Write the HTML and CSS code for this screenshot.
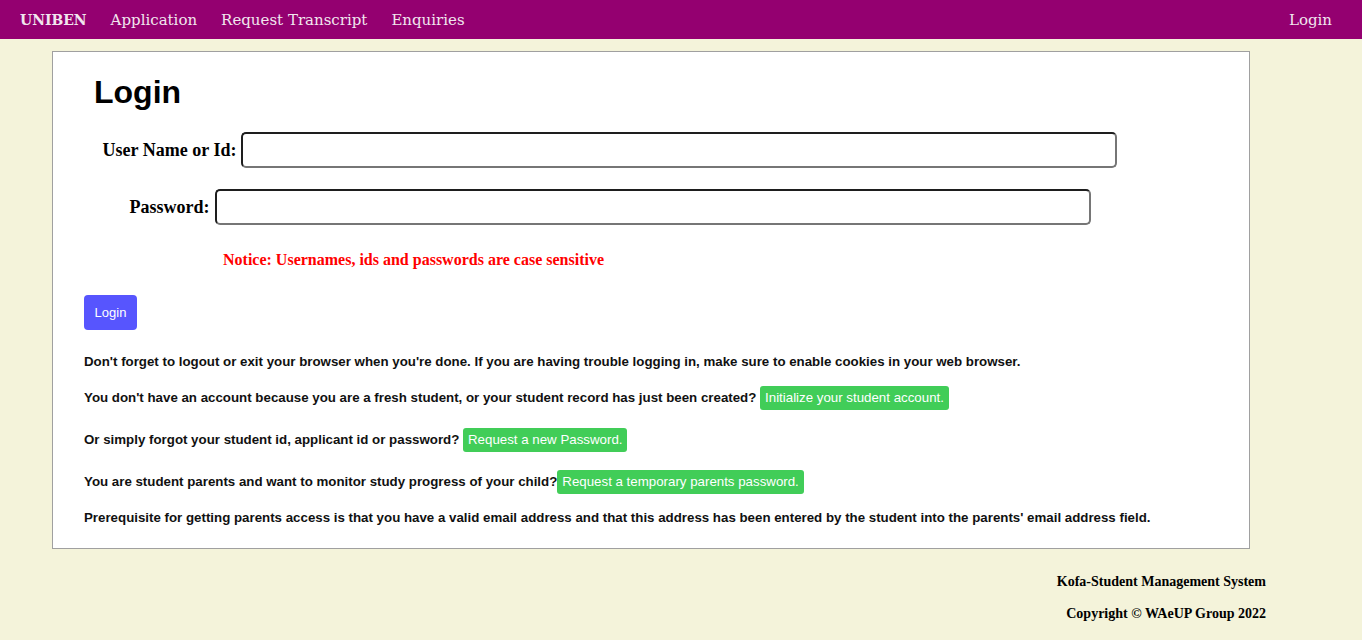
FILE: index.html
```html
<!DOCTYPE html>
<html lang="en">
<head>
<meta charset="utf-8">
<title>Login</title>
<link rel="stylesheet" href="styles.css">
</head>
<body>
<nav class="navbar">
  <div class="nav-left">
    <a class="brand" href="#">UNIBEN</a>
    <a class="nav-link" href="#">Application</a>
    <a class="nav-link" href="#">Request Transcript</a>
    <a class="nav-link" href="#">Enquiries</a>
  </div>
  <a class="nav-link" href="#">Login</a>
</nav>
<main class="card">
  <h1 class="title">Login</h1>
  <form class="form">
    <div class="row row-user">
      <label class="label" for="user">User Name or Id:</label>
      <input class="input" id="user" type="text">
    </div>
    <div class="row row-pass">
      <label class="label" for="pass">Password:</label>
      <input class="input" id="pass" type="password">
    </div>
  </form>
  <p class="notice">Notice: Usernames, ids and passwords are case sensitive</p>
  <div class="actions"><button class="btn-login" type="button">Login</button></div>
  <p class="info">Don't forget to logout or exit your browser when you're done. If you are having trouble logging in, make sure to enable cookies in your web browser.</p>
  <p class="info">You don't have an account because you are a fresh student, or your student record has just been created? <a class="btn-green" href="#">Initialize your student account.</a></p>
  <p class="info">Or simply forgot your student id, applicant id or password? <a class="btn-green" href="#">Request a new Password.</a></p>
  <p class="info">You are student parents and want to monitor study progress of your child?<a class="btn-green" href="#">Request a temporary parents password.</a></p>
  <p class="info">Prerequisite for getting parents access is that you have a valid email address and that this address has been entered by the student into the parents' email address field.</p>
</main>
<footer class="footer">
  <p class="foot-line">Kofa-Student Management System</p>
  <p class="foot-line">Copyright © WAeUP Group 2022</p>
</footer>
</body>
</html>
```
FILE: styles.css
```css
* { box-sizing: border-box; }
html, body { margin: 0; padding: 0; }
body {
  background: #f4f3da;
  font-family: "Liberation Sans", Arial, sans-serif;
  color: #000;
}
.navbar {
  height: 39px;
  background: #940070;
  display: flex;
  align-items: center;
  justify-content: space-between;
  padding: 0 30px 0 20px;
}
.nav-left { display: flex; align-items: center; gap: 24px; }
.navbar a {
  color: #f1e6ee;
  text-decoration: none;
  font-family: "DejaVu Serif", "Liberation Serif", serif;
  font-size: 15px;
  line-height: 18px;
  padding-top: 1px;
}
.navbar .brand {
  font-family: "DejaVu Serif Condensed", "DejaVu Serif", serif;
  font-stretch: condensed;
  font-weight: bold;
  font-size: 15.5px;
}
.card {
  margin: 12px 0 0 52px;
  width: 1198px;
  height: 498px;
  background: #fff;
  border: 1px solid #a0a0a0;
  padding: 0 31px;
  display: flex;
  flex-direction: column;
}
.title {
  margin: 22px 0 0 10px;
  font-size: 32px;
  line-height: 37px;
  font-weight: bold;
}
.form {
  width: 1052px;
  margin-top: 21px;
  display: flex;
  flex-direction: column;
  align-items: center;
  gap: 21px;
}
.row { display: flex; align-items: center; gap: 5px; }
.label {
  font-family: "Liberation Serif", "Times New Roman", serif;
  font-weight: bold;
  font-size: 18px;
}
.input {
  width: 876px;
  height: 36px;
  border: 2px solid;
  border-color: #1e1e1e #767676 #767676 #1e1e1e;
  border-radius: 5px;
  background: #fff;
}
.notice {
  margin: 26px 0 0 139px;
  color: #f00;
  font-family: "Liberation Serif", serif;
  font-weight: bold;
  font-size: 16px;
  line-height: 18px;
}
.actions { margin-top: 26px; }
.btn-login {
  width: 53px;
  height: 35px;
  border: none;
  border-radius: 4px;
  background: #5755fe;
  color: #fff;
  font-family: "Liberation Sans", Arial, sans-serif;
  font-size: 13px;
  padding: 0;
}
.info {
  margin: 0;
  font-size: 13.3px;
  font-weight: bold;
  line-height: 24px;
  color: #111;
}
.info:nth-of-type(2) { margin-top: 20px; }
.info:nth-of-type(3) { margin-top: 12px; }
.info:nth-of-type(4), .info:nth-of-type(5) { margin-top: 18px; }
.info:nth-of-type(6) { margin-top: 12px; }
.btn-green {
  display: inline-block;
  background: #41cd58;
  color: #fff;
  text-decoration: none;
  font-weight: normal;
  border-radius: 3px;
  padding: 0 5px;
  line-height: 24px;
}
.footer {
  width: 1266px;
  text-align: right;
  padding-top: 24px;
}
.foot-line {
  margin: 0 0 14px;
  font-family: "Liberation Serif", serif;
  font-weight: bold;
  font-size: 14px;
  line-height: 18px;
}
```
